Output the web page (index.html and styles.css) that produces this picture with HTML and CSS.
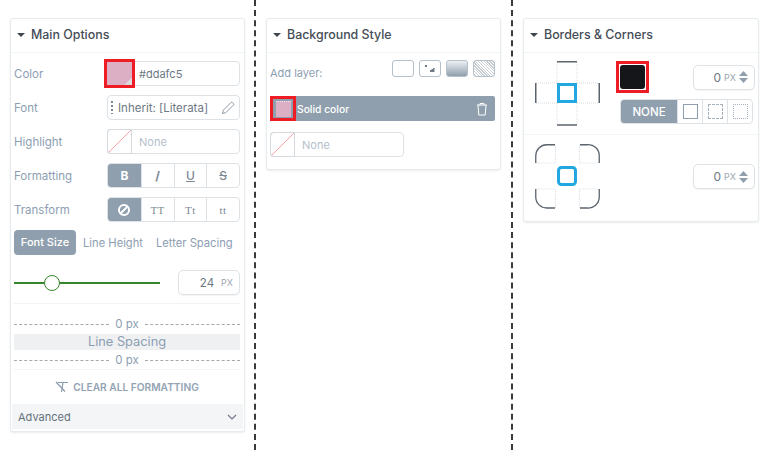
FILE: index.html
```html
<!DOCTYPE html>
<html lang="en">
<head>
    <meta charset="UTF-8">
    <title>Style Options</title>
    <link rel="stylesheet" href="styles.css">
</head>

<body>
    <div class="page">
        <!-- Main options -->
        <div class="column">
            <div class="panel">
                <div class="panel-title"><span class="caret"></span>Main Options</div>
                <div class="panel-body main-body">
                    <div class="row">
                        <span class="label">Color</span>
                        <div class="field">
                            <span class="swatch swatch-pink swatch-marked"></span>
                            <span class="field-text">#ddafc5</span>
                        </div>
                    </div>
                    <div class="row">
                        <span class="label">Font</span>
                        <div class="field field-font">
                            <span class="dots"></span>
                            <span class="font-name">Inherit: [Literata]</span>
                            <svg class="pencil" width="14" height="14" viewBox="0 0 14 14"><path d="M1.5 12.5l.8-3.3L9.8 1.7a1.3 1.3 0 0 1 1.9 0l.6.6a1.3 1.3 0 0 1 0 1.9L4.8 11.7z" fill="none" stroke="#8c99a6" stroke-width="1"/></svg>
                        </div>
                    </div>
                    <div class="row">
                        <span class="label">Highlight</span>
                        <div class="field">
                            <span class="swatch swatch-none"></span>
                            <span class="field-text muted">None</span>
                        </div>
                    </div>
                    <div class="row">
                        <span class="label">Formatting</span>
                        <div class="segments">
                            <span class="seg active bold">B</span>
                            <span class="seg italic">/</span>
                            <span class="seg underline">U</span>
                            <span class="seg strike">S</span>
                        </div>
                    </div>
                    <div class="row row-last">
                        <span class="label">Transform</span>
                        <div class="segments">
                            <span class="seg active">
                                <svg width="14" height="14" viewBox="0 0 14 14"><circle cx="7" cy="7" r="5" fill="none" stroke="#fff" stroke-width="2"/><path d="M3.5 10.5l7-7" stroke="#fff" stroke-width="2"/></svg>
                            </span>
                            <span class="seg serif">TT</span>
                            <span class="seg serif">Tt</span>
                            <span class="seg serif">tt</span>
                        </div>
                    </div>
                    <div class="tabs">
                        <span class="tab active">Font Size</span>
                        <span class="tab">Line Height</span>
                        <span class="tab">Letter Spacing</span>
                    </div>
                    <div class="slider-row">
                        <div class="slider"><span class="knob"></span></div>
                        <div class="number number-wide"><span>24</span><small>PX</small></div>
                    </div>
                    <div class="spacing">
                        <div class="dash-line"><span>0 px</span></div>
                        <div class="spacing-band">Line Spacing</div>
                        <div class="dash-line"><span>0 px</span></div>
                    </div>
                    <div class="clear">
                        <svg width="14" height="12" viewBox="0 0 14 12"><path d="M3 1.5h10M8 1.5L6.5 11M1 1l9 9.500" fill="none" stroke="#8a9bad" stroke-width="1.2"/></svg>
                        CLEAR ALL FORMATTING
                    </div>
                </div>
                <div class="advanced">
                    <span>Advanced</span>
                    <svg width="10" height="6" viewBox="0 0 10 6"><path d="M1 1l4 4 4-4" fill="none" stroke="#6b7682" stroke-width="1.1"/></svg>
                </div>
            </div>
        </div>

        <!-- Background -->
        <div class="column column-line">
            <div class="panel">
                <div class="panel-title"><span class="caret"></span>Background Style</div>
                <div class="panel-body bg-body">
                    <div class="add-layer">
                        <span class="label">Add layer:</span>
                        <div class="layer-types">
                            <span class="layer-type"></span>
                            <span class="layer-type">
                                <svg width="14" height="9" viewBox="0 0 14 9"><path d="M2 1h2v2H2zM7 8V6h1.500V5H10V4h1.500v4z" fill="#6f7c89"/></svg>
                            </span>
                            <span class="layer-type layer-gradient"></span>
                            <span class="layer-type layer-hatch"></span>
                        </div>
                    </div>
                    <div class="layer">
                        <span class="layer-thumb"><span class="layer-color"></span></span>
                        <span class="layer-name">Solid color</span>
                        <svg width="12" height="14" viewBox="0 0 12 14"><path d="M1 3h10M4 3V1.5h4V3M2 3l.8 10h6.400L10 3" fill="none" stroke="#fff" stroke-width="1"/></svg>
                    </div>
                    <div class="field field-short">
                        <span class="swatch swatch-none"></span>
                        <span class="field-text muted">None</span>
                    </div>
                </div>
            </div>
        </div>

        <!-- Borders -->
        <div class="column column-line">
            <div class="panel">
                <div class="panel-title"><span class="caret"></span>Borders &amp; Corners</div>
                <div class="border-row">
                    <svg class="box-widget" width="65" height="65" viewBox="0 0 65 65">
                        <path d="M22 1v21M42 1v21M22 42v22M42 42v22M1 22h21M1 42h21M42 22h22M42 42h22" fill="none" stroke="#d8dde1" stroke-dasharray="1 1"/>
                        <path d="M22 .75h20M22 64h20M.75 22v20M64.250 22v20" fill="none" stroke="#5b646d" stroke-width="1.5"/>
                        <rect x="23.5" y="23.5" width="17" height="17" fill="#fff" stroke="#22a7e0" stroke-width="3"/>
                    </svg>
                    <div class="border-controls">
                        <div class="border-top">
                            <span class="black-frame"><span class="black-swatch"></span></span>
                            <div class="number"><span>0</span><small>PX</small>
                                <svg width="9" height="12" viewBox="0 0 9 12"><path d="M4.500 0L9 5H0zM0 7h9l-4.500 5z" fill="#8f9fae"/></svg>
                            </div>
                        </div>
                        <div class="segments style-segments">
                            <span class="seg active none-seg">NONE</span>
                            <span class="seg"><i class="line-box solid"></i></span>
                            <span class="seg"><i class="line-box dashed"></i></span>
                            <span class="seg"><i class="line-box dotted"></i></span>
                        </div>
                    </div>
                </div>
                <div class="corner-row">
                    <svg class="box-widget" width="65" height="65" viewBox="0 0 65 65">
                        <path d="M20.500 1v18H1M44.500 1v18H64M20.500 64V45H1M44.500 64V45H64" fill="none" stroke="#d8dde1" stroke-dasharray="1 1"/>
                        <path d="M20 .75H12A11 11 0 0 0 .75 12v7M45 .75h7A11 11 0 0 1 64.250 12v7M20 64H12A11 11 0 0 1 .75 53v-8M45 64h7a11 11 0 0 0 12.250-11v-8" fill="none" stroke="#5b646d" stroke-width="1.3"/>
                        <rect x="23.5" y="23.5" width="17" height="17" rx="3" fill="#fff" stroke="#22a7e0" stroke-width="3"/>
                    </svg>
                    <div class="number"><span>0</span><small>PX</small>
                        <svg width="9" height="12" viewBox="0 0 9 12"><path d="M4.500 0L9 5H0zM0 7h9l-4.500 5z" fill="#8f9fae"/></svg>
                    </div>
                </div>
            </div>
        </div>
    </div>
</body>
</html>
```

FILE: styles.css
```css
body {
    margin: 0;
    background-color: #fff;
    font-family: Inter, "Liberation Sans", sans-serif;
    font-size: 11.5px;
    color: #5a6570;
}

.page {
    display: grid;
    grid-template-columns: 254px 257px 258px;
    height: 450px;
    overflow: hidden;
}

.column {
    box-sizing: border-box;
    padding: 18px 9px 0 10px;
}

.column-line {
    border-left: 2px dashed #3a3a3a;
    padding-right: 10px;
}

.panel {
    background-color: #fff;
    border: 1px solid #e6ecee;
    border-radius: 3px;
    box-shadow: 0 1px 2px rgba(0, 0, 0, 0.08);
}

.panel-title {
    display: flex;
    align-items: center;
    box-sizing: border-box;
    height: 34px;
    padding: 0 0 2px 6px;
    border-bottom: 1px solid #f1f4f5;
    font-size: 12.4px;
    font-weight: 500;
    color: #454c56;
}

.caret {
    width: 0;
    height: 0;
    margin-right: 6px;
    border-left: 4px solid transparent;
    border-right: 4px solid transparent;
    border-top: 4px solid #3f4650;
}

.panel-body {
    padding: 8px 4px 0 3px;
}

.main-body {
    display: flex;
    flex-direction: column;
}

.row {
    display: flex;
    justify-content: space-between;
    align-items: center;
    height: 25px;
    margin-bottom: 9px;
}

.row-last {
    margin-bottom: 8px;
}

.label {
    color: #8d9eb2;
}

/* Fields */
.field {
    display: flex;
    align-items: center;
    box-sizing: border-box;
    width: 133px;
    height: 25px;
    border: 1px solid #dde2e6;
    border-radius: 4px;
}

.field-short {
    width: 134px;
}

.field-text {
    margin-left: 7px;
    font-size: 11px;
    color: #6d7884;
}

.muted {
    color: #b5c0cb;
}

.swatch {
    flex: none;
    box-sizing: border-box;
    width: 25px;
    height: 25px;
    margin: -1px 0 -1px -1px;
}

.swatch-pink {
    background: linear-gradient(135deg, #ddafc5 84%, #dcdcdc 84%);
    margin: 0 0 0 -1px;
    height: 23px;
}

.swatch-marked {
    outline: 3px solid #ee1c25;
}

.swatch-none {
    border: 1px solid #d5dadf;
    background: linear-gradient(to top left, transparent 48%, #f5a3a8 48%, #f5a3a8 52%, transparent 52%);
    border-radius: 3px 0 0 3px;
}

.field-font {
    padding: 0 4px 0 3px;
}

.dots {
    width: 2px;
    height: 13px;
    background: repeating-linear-gradient(to bottom, #7e8a96 0, #7e8a96 2px, transparent 2px, transparent 4px);
}

.font-name {
    flex: 1;
    margin-left: 5px;
    color: #6d7884;
    white-space: nowrap;
}

.pencil {
    flex: none;
}

/* Button groups */
.segments {
    display: grid;
    grid-template-columns: repeat(4, 1fr);
    box-sizing: border-box;
    width: 133px;
    height: 25px;
    border: 1px solid #dde2e6;
    border-radius: 4px;
    overflow: hidden;
}

.seg {
    display: flex;
    justify-content: center;
    align-items: center;
    border-left: 1px solid #dde2e6;
    color: #7c8894;
    font-size: 12px;
}

.seg:first-child {
    border-left: 0;
}

.seg.active {
    background-color: #8f9fae;
    color: #fff;
}

.bold,
.italic {
    font-weight: 700;
}

.underline {
    text-decoration: underline;
    font-weight: 500;
}

.strike {
    text-decoration: line-through;
    font-weight: 500;
}

.seg.serif {
    font-family: "Liberation Serif", serif;
    font-size: 11px;
    letter-spacing: 0.5px;
}

/* Tabs and slider */
.tabs {
    display: flex;
    align-items: center;
    height: 25px;
    white-space: nowrap;
}

.tab {
    margin-left: 13px;
    color: #8d9eb2;
    font-size: 11.2px;
}

.tab.active {
    margin-left: 0;
    margin-right: -6px;
    width: 62px;
    height: 25px;
    line-height: 25px;
    text-align: center;
    border-radius: 4px;
    background-color: #8f9fae;
    color: #fff;
    font-size: 11px;
    font-weight: 500;
}

.slider-row {
    display: flex;
    justify-content: space-between;
    align-items: center;
    margin-top: 15px;
    padding-bottom: 8px;
    border-bottom: 1px solid #f1f4f5;
}

.slider {
    position: relative;
    width: 146px;
    height: 2px;
    background-color: #35852c;
}

.knob {
    position: absolute;
    left: 30px;
    top: -7px;
    box-sizing: border-box;
    width: 16px;
    height: 16px;
    border: 1.5px solid #35852c;
    border-radius: 50%;
    background-color: #fff;
}

.number {
    display: flex;
    justify-content: flex-end;
    align-items: center;
    gap: 3px;
    box-sizing: border-box;
    width: 62px;
    height: 25px;
    padding-right: 6px;
    border: 1px solid #dde2e6;
    border-radius: 5px;
    box-shadow: 0 1px 1px rgba(0, 0, 0, 0.05);
    color: #6d7884;
    font-size: 12px;
}

.number small {
    font-size: 9px;
    color: #9aa6b2;
}

.number-wide {
    font-size: 11.5px;
}

.number-wide small {
    margin-left: 4px;
}

/* Line spacing box */
.spacing {
    padding: 11px 0 0;
    border-bottom: 1px solid #f1f4f5;
    text-align: center;
}

.dash-line {
    display: flex;
    align-items: center;
    height: 12px;
    gap: 6px;
    margin: 3px 0;
    color: #8d9eb2;
    font-size: 11.5px;
}

.spacing-band + .dash-line {
    margin-top: 4px;
}

.dash-line:first-child {
    margin-bottom: 4px;
}

.dash-line::before,
.dash-line::after {
    content: "";
    flex: 1;
    border-top: 1px dashed #a9a9a9;
}

.spacing-band {
    height: 16px;
    line-height: 16px;
    background-color: #eef0f2;
    color: #8d9eb2;
    font-size: 12.8px;
}

.clear {
    display: flex;
    justify-content: center;
    align-items: center;
    gap: 4px;
    height: 34px;
    color: #93a3b4;
    font-size: 10.2px;
    font-weight: 600;
    white-space: nowrap;
}

.advanced {
    display: flex;
    justify-content: space-between;
    align-items: center;
    height: 25px;
    margin: 0 1px 2px;
    padding: 0 6px 0 6px;
    background-color: #f3f5f6;
    font-size: 11px;
    color: #66717c;
}

/* Background panel */
.bg-body {
    padding: 7px 5px 12px 3px;
}

.add-layer {
    display: flex;
    justify-content: space-between;
    height: 36px;
}

.add-layer .label {
    margin-top: 6px;
    font-size: 11px;
}

.layer-types {
    display: flex;
    gap: 5px;
}

.layer-type {
    display: flex;
    justify-content: center;
    align-items: center;
    box-sizing: border-box;
    width: 22px;
    height: 17px;
    border: 1px solid #b4c0ca;
    border-radius: 3px;
}

.layer-gradient {
    background: linear-gradient(to bottom, #eef0f2, #8f9fae);
}

.layer-hatch {
    background: repeating-linear-gradient(45deg, #fff 0, #fff 1px, #c9ced3 1px, #c9ced3 2px);
}

.layer {
    display: flex;
    align-items: center;
    height: 25px;
    padding-right: 7px;
    margin-bottom: 11px;
    border-radius: 2px;
    background-color: #8f9fae;
    color: #fff;
}

.layer-thumb {
    display: flex;
    justify-content: center;
    align-items: center;
    box-sizing: border-box;
    width: 26px;
    height: 25px;
    border: 3px solid #ee1c25;
}

.layer-color {
    box-sizing: border-box;
    width: 15px;
    height: 16px;
    border-top: 1px dotted #f3e3ea;
    background-color: #ddafc5;
}

.layer-name {
    flex: 1;
    margin-left: 1px;
    font-weight: 500;
    font-size: 10.3px;
}

/* Borders panel */
.border-row {
    display: flex;
    padding: 8px 3px 8px 11px;
    border-bottom: 1px solid #f1f4f5;
}

.box-widget {
    flex: none;
}

.border-controls {
    flex: 1;
    margin-left: 16px;
}

.border-top {
    display: flex;
    justify-content: space-between;
    align-items: center;
    height: 32px;
}

.black-frame {
    display: block;
    box-sizing: border-box;
    width: 33px;
    height: 32px;
    padding: 1px;
    border: 3px solid #ee1c25;
}

.black-swatch {
    display: block;
    height: 100%;
    border-radius: 3px;
    background-color: #14161a;
}

.style-segments {
    grid-template-columns: 56px 1fr 1fr 1fr;
    margin-top: 6px;
    margin-left: 4px;
}

.none-seg {
    font-size: 11.5px;
    font-weight: 500;
}

.line-box {
    display: block;
    box-sizing: border-box;
    width: 15px;
    height: 15px;
    border: 1px solid #8f9fae;
}

.line-box.dashed {
    border-style: dashed;
    border-color: #a5b1bc;
}

.line-box.dotted {
    border-style: dotted;
    border-color: #a5b1bc;
}

.corner-row {
    display: flex;
    justify-content: space-between;
    align-items: center;
    padding: 9px 3px 12px 11px;
}
```
